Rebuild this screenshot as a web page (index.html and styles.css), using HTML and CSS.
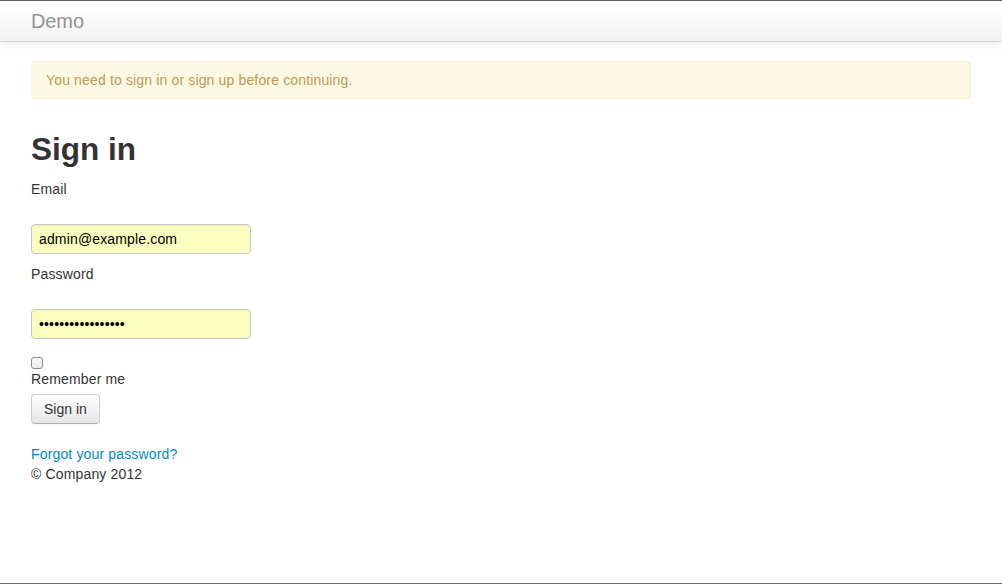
FILE: index.html
```html
<!DOCTYPE html>
<html>
<head>
<meta charset="utf-8">
<title>Demo</title>
<link rel="stylesheet" href="styles.css">
</head>
<body>
<div class="frame">
  <div class="navbar">
    <div class="container">
      <a class="brand" href="#">Demo</a>
    </div>
  </div>
  <div class="container main">
    <div class="alert">You need to sign in or sign up before continuing.</div>
    <h2 class="title">Sign in</h2>
    <form class="form">
      <div class="field">
        <label class="label" for="email">Email</label>
        <div class="spacer"></div>
        <input class="input" id="email" type="email" value="admin@example.com">
      </div>
      <div class="field">
        <label class="label" for="password">Password</label>
        <div class="spacer"></div>
        <input class="input" id="password" type="password" value="aaaaaaaaaaaaaaaaa">
      </div>
      <div class="check-row">
        <input class="check" id="remember" type="checkbox">
      </div>
      <label class="label" for="remember">Remember me</label>
      <div class="actions">
        <button class="btn" type="button">Sign in</button>
      </div>
    </form>
    <a class="link" href="#">Forgot your password?</a>
    <div class="footer">© Company 2012</div>
  </div>
</div>
</body>
</html>
```

FILE: styles.css
```css
html, body {
  margin: 0;
  padding: 0;
  background: #fff;
}
body {
  font-family: "Liberation Sans", Arial, sans-serif;
  font-size: 14px;
  line-height: 20px;
  color: #333;
  letter-spacing: 0.15px;
}
.frame {
  box-sizing: border-box;
  height: 584px;
  border-top: 1px solid #5e5e5e;
  border-bottom: 1px solid #6e6e6e;
  overflow: hidden;
}
.container {
  width: 940px;
  margin: 0 auto;
}
.navbar {
  height: 40px;
  border-bottom: 1px solid #d4d4d4;
  background: linear-gradient(#ffffff, #f2f2f2);
  box-shadow: 0 1px 10px rgba(0, 0, 0, 0.1);
  position: relative;
}
.brand {
  display: inline-block;
  padding: 10px 0;
  font-size: 20px;
  line-height: 21px;
  color: #939393;
  text-decoration: none;
  font-weight: 300;
  letter-spacing: -0.1px;
}
.main {
  padding-top: 19px;
}
.alert {
  padding: 8px 35px 8px 14px;
  margin-bottom: 20px;
  background: #fcf8e3;
  border: 1px solid #fbeed5;
  border-radius: 4px;
  color: #c09853;
  font-size: 14px;
}
.title {
  margin: 30px 0 10px;
  font-size: 31.5px;
  line-height: 40px;
  font-weight: bold;
  color: #333;
  letter-spacing: 0;
}
.form {
  margin: 0 0 20px;
}
.label {
  display: block;
  margin-bottom: 5px;
}
.spacer {
  height: 20px;
}
.input {
  display: block;
  box-sizing: border-box;
  width: 220px;
  height: 30px;
  padding: 4px 6px 4px 7px;
  margin: 0 0 10px;
  font-family: "Liberation Sans", Arial, sans-serif;
  font-size: 14px;
  line-height: 20px;
  letter-spacing: 0.15px;
  color: #000;
  background: #fafebf;
  border: 1px solid #c8c8c8;
  border-radius: 4px;
  box-shadow: inset 0 1px 1px rgba(0, 0, 0, 0.05);
  outline: none;
}
.check-row {
  box-sizing: border-box;
  height: 20px;
  padding-top: 8px;
}
.check {
  appearance: none;
  -webkit-appearance: none;
  display: block;
  box-sizing: border-box;
  width: 12px;
  height: 12px;
  margin: 0;
  border: 1px solid #8a8a8a;
  border-radius: 3px;
  background: linear-gradient(#fdfdfd, #e8e8e8);
}
.actions {
  height: 30px;
}
.btn {
  display: inline-block;
  box-sizing: border-box;
  height: 30px;
  padding: 4px 12px;
  font-family: "Liberation Sans", Arial, sans-serif;
  font-size: 14px;
  line-height: 20px;
  letter-spacing: 0;
  color: #333;
  background: linear-gradient(#ffffff, #e6e6e6);
  border: 1px solid #cccccc;
  border-bottom-color: #b3b3b3;
  border-radius: 4px;
  box-shadow: inset 0 1px 0 rgba(255, 255, 255, 0.2), 0 1px 2px rgba(0, 0, 0, 0.05);
}
.link {
  display: block;
  color: #0088cc;
  text-decoration: none;
}
.footer {
  color: #333;
}
```
